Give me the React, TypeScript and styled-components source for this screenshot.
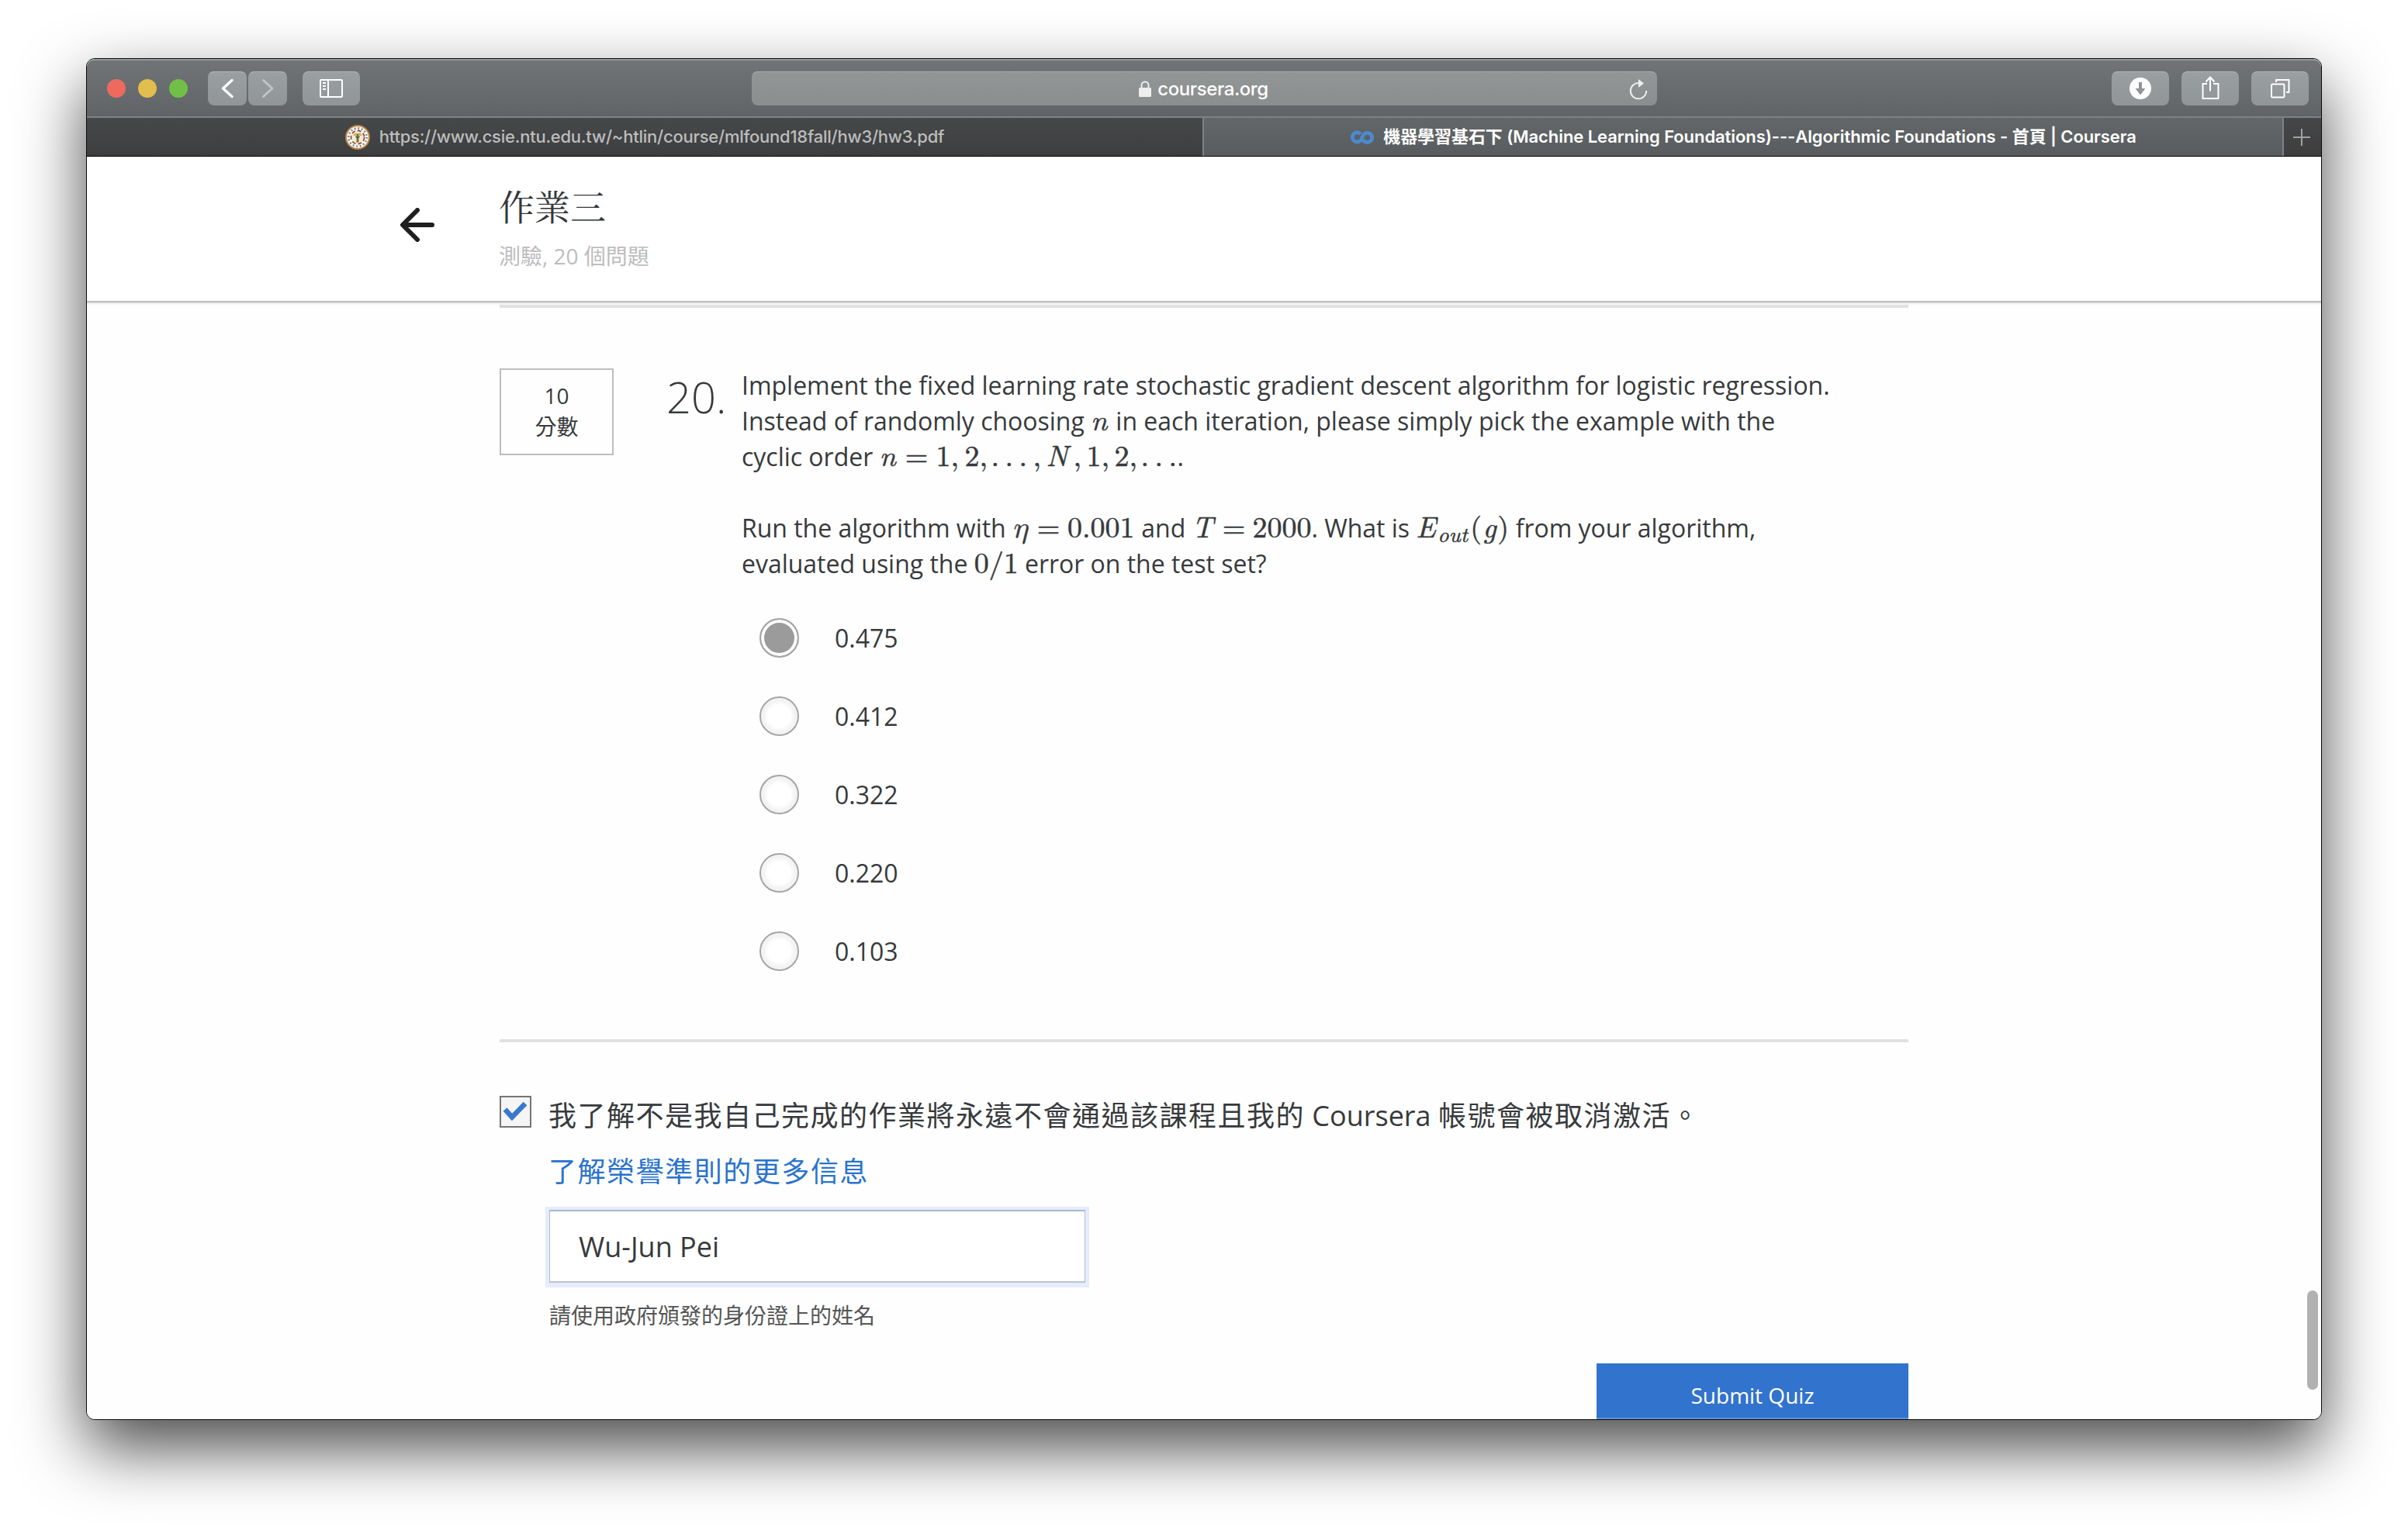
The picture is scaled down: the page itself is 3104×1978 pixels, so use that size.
import React from "react";
import styled, { createGlobalStyle } from "styled-components";

const ui = `Inter, "Noto Sans CJK TC", sans-serif`;
const body = `"Open Sans", "Noto Sans CJK TC", sans-serif`;

const GlobalStyle = createGlobalStyle`
  html, body { margin: 0; background: #fff; overflow: hidden; }
  *, *::before, *::after { box-sizing: border-box; }
`;

const Desktop = styled.div`
  width: 3104px;
  height: 1978px;
  padding: 75px 111px 147px;
  overflow: hidden;
  background: #fff;
`;

const Window = styled.div`
  display: flex;
  flex-direction: column;
  width: 2882px;
  height: 1756px;
  border: 1px solid #0a0a0a;
  border-radius: 11px;
  background: #fff;
  box-shadow: 0 36px 84px rgba(0, 0, 0, 0.71);
`;

const Toolbar = styled.div`
  display: flex;
  align-items: center;
  height: 76px;
  flex: none;
  padding: 0 16px 0 26px;
  border-top: 2px solid #959b97;
  border-bottom: 2px solid #7e8284;
  border-radius: 10px 10px 0 0;
  background: linear-gradient(#707476, #606466);
`;

const Light = styled.span<{ $color: string }>`
  width: 24px;
  height: 24px;
  margin-right: 16px;
  border-radius: 50%;
  background: ${(p) => p.$color};
`;

const ToolButton = styled.button<{ $width: number; $gap?: number }>`
  display: flex;
  width: ${(p) => p.$width}px;
  height: 44px;
  margin: 0 0 0 ${(p) => p.$gap ?? 0}px;
  padding: 0;
  border: 0;
  border-radius: 8px;
  background: linear-gradient(#9a9fa1, #919597);
  box-shadow: inset 0 2px 0 -1px #b0b4b5;
`;

const AddressBar = styled.div`
  display: grid;
  grid-template-columns: 1fr auto 1fr;
  align-items: center;
  width: 1167px;
  height: 44px;
  margin: 0 auto 0 505px;
  padding-right: 10px;
  border-radius: 8px;
  background: linear-gradient(#929696, #8b8e8e);
  box-shadow: inset 0 2px 0 -1px #a9acac;
`;

const Host = styled.div`
  grid-column: 2;
  display: flex;
  align-items: center;
  gap: 8px;
  margin-left: 8px;
  font: 500 24px/44px ${ui};
  letter-spacing: -0.4px;
  color: #fff;
`;

const HostName = styled.span`
  padding-top: 1px;
`;

const ReloadSlot = styled.span`
  display: flex;
  justify-self: end;
`;

const TabBar = styled.div`
  display: flex;
  height: 50px;
  flex: none;
  border-bottom: 1px solid #000;
`;

const Tab = styled.div<{ $active?: boolean; $width: number }>`
  display: flex;
  align-items: center;
  justify-content: center;
  gap: 12px;
  width: ${(p) => p.$width}px;
  border-right: 2px solid #7e8284;
  background: ${(p) => (p.$active ? "linear-gradient(#636769, #585c5e)" : "linear-gradient(#454849, #3e3e3f)")};
  color: ${(p) => (p.$active ? "#fff" : "#bcbdbd")};
  font: ${(p) => (p.$active ? 600 : 500)} 22px/49px ${ui};
  white-space: nowrap;
`;

const TabTitle = styled.span<{ $spacing: number }>`
  letter-spacing: ${(p) => p.$spacing}px;
`;

const NewTab = styled.div`
  flex: 1;
  background: linear-gradient(#454647, #3e3e3f);
`;

const Page = styled.div`
  position: relative;
  flex: 1;
  overflow: hidden;
  border-radius: 0 0 10px 10px;
  background: #fefefe;
  color: #373a3c;
  font-family: ${body};
`;

const Header = styled.header`
  display: flex;
  height: 188px;
  padding: 32px 0 0 403px;
  border-bottom: 2px solid #bdbdbd;
  box-shadow: 0 1px 3px rgba(0, 0, 0, 0.16);
  background: #fff;
`;

const BackSlot = styled.div`
  width: 128px;
  padding-top: 34px;
`;

const Title = styled.h1`
  margin: 0;
  font: 400 46px/60px "Noto Serif CJK TC", "Noto Serif TC", "Songti TC", "Noto Sans CJK TC", serif;
  color: #32373a;
`;

const Subtitle = styled.div`
  margin-top: 16px;
  font-size: 28px;
  line-height: 40px;
  color: #bdbdbd;
`;

const Content = styled.main`
  width: 1816px;
  margin: 3px auto 0;
`;

const Divider = styled.hr`
  height: 4px;
  margin: 0;
  border: 0;
  background: #e1e1e1;
`;

const Question = styled.section`
  display: grid;
  grid-template-columns: 147px 95px 1fr;
  column-gap: 70px;
  padding: 77px 0 63px;
`;

const Points = styled.div`
  width: 147px;
  height: 112px;
  margin-top: 1px;
  padding-top: 13px;
  border: 2px solid #bdbdbd;
  font-size: 28px;
  line-height: 40px;
  text-align: center;
`;

const Number = styled.div`
  margin: -1px 0 0 -2px;
  font-size: 56px;
  font-weight: 300;
  line-height: 76px;
`;

const Prompt = styled.div`
  margin-left: -70px;
`;

const Line = styled.div`
  height: 46px;
  font-size: 32px;
  line-height: 46px;
  letter-spacing: -0.02px;
  white-space: pre;
`;

const Sym = styled.span<{ $w: number; $it?: boolean; $center?: boolean; $size?: number }>`
  display: inline-block;
  width: ${(p) => p.$w}px;
  font-family: "Latin Modern Roman", "Latin Modern Math", "Liberation Serif", serif;
  font-size: ${(p) => p.$size ?? 38}px;
  font-style: ${(p) => (p.$it ? "italic" : "normal")};
  line-height: 30px;
  text-align: ${(p) => (p.$center ? "center" : "left")};
  -webkit-text-stroke: 0.5px currentColor;
`;

const Greek = styled(Sym)`
  font-family: "Latin Modern Math", "Liberation Serif", serif;
`;

const Subscript = styled(Sym)`
  vertical-align: -6px;
  line-height: 20px;
`;

const Options = styled.ul`
  margin: 22px 0 0;
  padding: 0 0 0 23px;
  list-style: none;
`;

const Option = styled.li`
  display: flex;
  align-items: center;
  gap: 46px;
  height: 101px;
  font-size: 32px;
`;

const Radio = styled.span<{ $checked: boolean }>`
  width: 51px;
  height: 51px;
  border: 2px solid #a5a5a5;
  border-radius: 50%;
  background: ${(p) => (p.$checked ? "#9b9b9b" : "#fff")};
  box-shadow: ${(p) => (p.$checked ? "inset 0 0 0 4px #fff" : "inset 0 0 4px 6px #f3f3f3")};
`;

const Honor = styled.section`
  display: grid;
  grid-template-columns: 64px 1fr;
  padding-top: 59px;
`;

const Checkbox = styled.span`
  display: flex;
  width: 41px;
  height: 41px;
  margin-top: 10px;
  border: 2px solid #757575;
  background: #f5f5f5;
`;

const Pledge = styled.div`
  margin-left: -1px;
  font-size: 36px;
  line-height: 72px;
  white-space: nowrap;
`;

const Wide = styled.span`
  letter-spacing: 1.5px;
`;

const HonorLink = styled.a`
  display: block;
  margin-left: -1px;
  font-size: 36px;
  line-height: 72px;
  letter-spacing: 1.55px;
  color: #2a73cc;
`;

const NameInput = styled.input`
  display: block;
  width: 691px;
  height: 94px;
  margin-top: 13px;
  padding: 0 0 0 37px;
  border: 1px solid #b3bccd;
  border-top: 2px solid #a9b6cf;
  border-bottom: 2px solid #bcc3d0;
  outline: 0;
  box-shadow: 0 1px 0 5px #e4ecfd;
  background: #fff;
  color: #373a3c;
  font: 36px/50px ${body};
`;

const Hint = styled.div`
  margin-top: 22px;
  font-size: 28px;
  line-height: 40px;
  color: #555;
`;

const Submit = styled.button`
  display: block;
  width: 402px;
  height: 82px;
  margin: 42px 0 0 auto;
  padding: 0;
  border: 0;
  background: linear-gradient(#3273cd 70px, #5f93dc 70px);
  color: #fff;
  font: 28px/82px ${body};
`;

const Scrollbar = styled.div`
  position: absolute;
  right: 4px;
  bottom: 38px;
  width: 14px;
  height: 128px;
  border-radius: 7px;
  background: #b1b1b1;
`;

const Icon = ({ w = 74, children }: { w?: number; children: React.ReactNode }) => (
  <svg width={w} height={44} viewBox={`0 0 ${w} 44`} fill="none" stroke="#fff" strokeWidth={2}>
    {children}
  </svg>
);

const Seal = () => (
  <svg width={32} height={32} viewBox="0 0 32 32">
    <circle cx="16" cy="16" r="15" fill="#f6f4ee" stroke="#b9853f" strokeWidth="2" />
    <circle cx="16" cy="16" r="11.7" fill="none" stroke="#6d6d78" strokeWidth="2.400" strokeDasharray="1.600 3" />
    <circle cx="16" cy="16" r="8.600" fill="#f1ebcf" stroke="#8f3b3c" strokeWidth="1.6" strokeDasharray="5 3" />
    <path d="M10 14q2-5 6-3q4-2 6 3q-3-1-4 1v8h-4v-8q-1-2-4-1z" fill="#c9b158" />
    <path d="M16 12v10M13.500 15l2.500 2l2.500-2" stroke="#4f5668" strokeWidth="1.500" fill="none" />
  </svg>
);

const CourseraMark = () => (
  <svg width={31} height={18} viewBox="0 0 31 18" fill="none" stroke="#4b8ad0" strokeWidth="4.800">
    <path d="M13.800 4.800A6.100 6.100 0 1 0 13.800 13.200C15.200 11.800 15.800 10.200 16.600 8A6.100 6.100 0 1 1 17.200 12.400" />
  </svg>
);

const answers = ["0.475", "0.412", "0.322", "0.220", "0.103"];

export default function App() {
  return (
    <>
      <GlobalStyle />
      <Desktop>
        <Window>
          <Toolbar>
            <Light $color="#ee6a5f" />
            <Light $color="#e1be4d" />
            <Light $color="#71bf47" />
            <ToolButton $width={50} $gap={10}>
              <Icon w={50}>
                <path d="M31 11.500L19.500 22L31 32.500" strokeWidth={3.4} strokeLinecap="round" strokeLinejoin="round" />
              </Icon>
            </ToolButton>
            <ToolButton $width={50} $gap={2}>
              <Icon w={50}>
                <path d="M19.500 11.500L31 22L19.500 32.500" stroke="#c1c4c5" strokeWidth={3} strokeLinecap="round" strokeLinejoin="round" />
              </Icon>
            </ToolButton>
            <ToolButton $width={74} $gap={20}>
              <Icon>
                <rect x="23" y="11" width="28" height="22" rx="1" />
                <path d="M33 11V33M26 15H30M26 19H30M26 23H30" />
              </Icon>
            </ToolButton>
            <AddressBar>
              <Host>
                <svg width={16} height={21} viewBox="0 0 16 21" fill="#eee">
                  <rect x="0" y="9" width="16" height="12" rx="1.500" />
                  <path d="M3.500 10V6a4.500 4.500 0 0 1 9 0v4" fill="none" stroke="#eee" strokeWidth="2" />
                </svg>
                <HostName>coursera.org</HostName>
              </Host>
              <ReloadSlot>
                <svg width={28} height={28} viewBox="0 0 28 28" fill="none" stroke="#eee" strokeWidth="2">
                  <path d="M15 6A10.200 10.200 0 1 0 24.200 16" />
                  <path d="M14 1L21 6.500L14 12Z" fill="#eee" stroke="none" />
                </svg>
              </ReloadSlot>
            </AddressBar>
            <ToolButton $width={74}>
              <Icon>
                <circle cx="37" cy="22" r="14" fill="#fff" stroke="none" />
                <path d="M35 14H39V22H43.500L37 30.500L30.500 22H35Z" fill="#909496" stroke="none" />
              </Icon>
            </ToolButton>
            <ToolButton $width={74} $gap={16}>
              <Icon>
                <path d="M33 16H27.500V35H47.500V16H41M37 25.500V8M31.500 13.500L37 7.500L42.500 13.500" strokeLinejoin="round" />
              </Icon>
            </ToolButton>
            <ToolButton $width={74} $gap={16}>
              <Icon>
                <rect x="26" y="16.500" width="16.500" height="17" rx="1.500" />
                <path d="M32 14V11H48.500V27H45" strokeLinejoin="round" />
              </Icon>
            </ToolButton>
          </Toolbar>
          <TabBar>
            <Tab $width={1440}>
              <Seal />
              <TabTitle $spacing={-0.24}>https://www.csie.ntu.edu.tw/~htlin/course/mlfound18fall/hw3/hw3.pdf</TabTitle>
            </Tab>
            <Tab $width={1392} $active>
              <CourseraMark />
              <TabTitle $spacing={-0.08}>
                機器學習基石下 (Machine Learning Foundations)---Algorithmic Foundations - 首頁 | Coursera
              </TabTitle>
            </Tab>
            <NewTab>
              <svg width={48} height={49} viewBox="0 0 48 49" stroke="#a0a1a1" strokeWidth={2}>
                <path d="M12 25H34M23 14V36" />
              </svg>
            </NewTab>
          </TabBar>
          <Page>
            <Header>
              <BackSlot>
                <svg width={46} height={44} viewBox="0 0 46 44" fill="none" stroke="#1f1f1f" strokeWidth={6} strokeLinecap="round" strokeLinejoin="round">
                  <path d="M23 3L4 22L23 41M5 22H42" />
                </svg>
              </BackSlot>
              <div>
                <Title>作業三</Title>
                <Subtitle>測驗, 20 個問題</Subtitle>
              </div>
            </Header>
            <Content>
              <Divider />
              <Question>
                <Points>
                  <div>10</div>
                  <div>分數</div>
                </Points>
                <Number>20.</Number>
                <Prompt>
                  <Line>Implement the fixed learning rate stochastic gradient descent algorithm for logistic regression.</Line>
                  <Line>
                    Instead of randomly choosing <Sym $w={24} $it>n</Sym> in each iteration, please simply pick the example with the
                  </Line>
                  <Line>
                    cyclic order <Sym $w={23} $it>n</Sym>
                    <Sym $w={50} $center>=</Sym>
                    <Sym $w={19}>1</Sym><Sym $w={18}>,</Sym><Sym $w={19}>2</Sym><Sym $w={15}>,</Sym>
                    <Sym $w={18}>.</Sym><Sym $w={18}>.</Sym><Sym $w={18}>.</Sym><Sym $w={17}>,</Sym>
                    <Sym $w={35} $it>N</Sym><Sym $w={17}>,</Sym>
                    <Sym $w={19}>1</Sym><Sym $w={17}>,</Sym><Sym $w={19}>2</Sym><Sym $w={15}>,</Sym>
                    <Sym $w={18}>.</Sym><Sym $w={18}>.</Sym><Sym $w={11}>.</Sym>.
                  </Line>
                  <Line />
                  <Line>
                    Run the algorithm with <Greek $w={22} $it>η</Greek>
                    <Sym $w={49} $center>=</Sym>
                    <Sym $w={87}>0.001</Sym> and <Sym $w={30} $it>T</Sym>
                    <Sym $w={48} $center>=</Sym>
                    <Sym $w={76}>2000</Sym>. What is <Sym $w={28} $it>E</Sym>
                    <Subscript $w={42} $it $size={28}>out</Subscript>
                    <Sym $w={16}>(</Sym><Sym $w={19} $it>g</Sym><Sym $w={15}>)</Sym> from your algorithm,
                  </Line>
                  <Line>
                    evaluated using the <Sym $w={19}>0</Sym><Sym $w={19} $center>/</Sym><Sym $w={19}>1</Sym> error on the test set?
                  </Line>
                  <Options>
                    {answers.map((a, i) => (
                      <Option key={a}>
                        <Radio $checked={i === 0} />
                        {a}
                      </Option>
                    ))}
                  </Options>
                </Prompt>
              </Question>
              <Divider />
              <Honor>
                <Checkbox>
                  <svg width={37} height={37} viewBox="0 0 37 37" fill="none" stroke="#3a78d0" strokeWidth={6.5}>
                    <path d="M5 15.500L14 25.500L31 8" />
                  </svg>
                </Checkbox>
                <div>
                  <Pledge>
                    <Wide>我了解不是我自己完成的作業將永遠不會通過該課程且我的</Wide> Coursera <Wide>帳號會被取消激活。</Wide>
                  </Pledge>
                  <HonorLink>了解榮譽準則的更多信息</HonorLink>
                  <NameInput defaultValue="Wu-Jun Pei" />
                  <Hint>請使用政府頒發的身份證上的姓名</Hint>
                </div>
              </Honor>
              <Submit>Submit Quiz</Submit>
            </Content>
            <Scrollbar />
          </Page>
        </Window>
      </Desktop>
    </>
  );
}
